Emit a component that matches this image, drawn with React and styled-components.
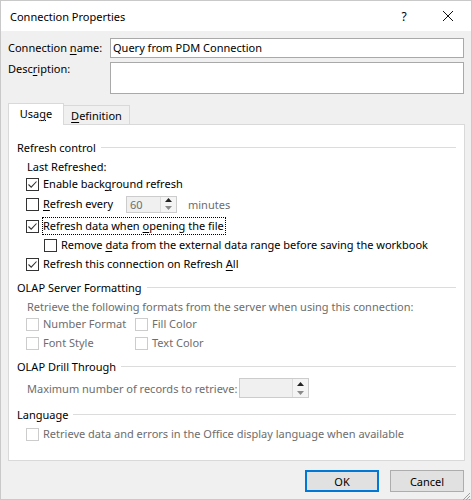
// Connection Properties dialog (Excel style)

import React from 'react';
import styled, { createGlobalStyle } from 'styled-components';

const GlobalStyle = createGlobalStyle`
    body {
        margin: 0;
        background: #ffffff;
    }
`

const Check = ({ checked, disabled }) => (
    <Box disabled={disabled}>
        {checked && (
            <svg width="11" height="11" viewBox="0 0 11 11">
                <path d="M1.5 5.5 L4.2 8.2 L9.5 2.5" fill="none" stroke="#333" strokeWidth="1.1" />
            </svg>
        )}
    </Box>
)

const Spinner = ({ value, width, height, gap }) => (
    <Spin width={width} height={height} gap={gap}>
        <SpinValue>{value}</SpinValue>
        <SpinButtons>
            <SpinHalf>
                <svg width="7" height="4" viewBox="0 0 7 4"><path d="M0 4 L3.5 0 L7 4 Z" fill="#222" /></svg>
            </SpinHalf>
            <SpinHalf>
                <svg width="7" height="4" viewBox="0 0 7 4"><path d="M0 0 L3.5 4 L7 0 Z" fill="#8a8a8a" /></svg>
            </SpinHalf>
        </SpinButtons>
    </Spin>
)

const App = () => {
    return (
        <>
            <GlobalStyle />
            <Window>
                <TitleBar>
                    <Title>Connection Properties</Title>
                    <HelpButton>?</HelpButton>
                    <CloseButton>
                        <svg width="10" height="10" viewBox="0 0 10 10">
                            <path d="M0 0 L10 10 M10 0 L0 10" stroke="#111" strokeWidth="1" />
                        </svg>
                    </CloseButton>
                </TitleBar>
                <Body>
                    <FormGrid>
                        <FieldLabel>Connection <u>n</u>ame:</FieldLabel>
                        <TextInput>Query from PDM Connection</TextInput>
                        <FieldLabel top>Desc<u>r</u>iption:</FieldLabel>
                        <TextInput />
                    </FormGrid>

                    <Tabs>
                        <Tab active>Usa<u>g</u>e</Tab>
                        <Tab><u>D</u>efinition</Tab>
                    </Tabs>
                    <Panel>
                        <Legend>
                            <span>Refresh control</span>
                            <Rule />
                        </Legend>
                        <Row h={18} indent={10}>Last Refreshed:</Row>
                        <Row h={18} indent={9}>
                            <Check checked />
                            <CheckText>Enable back<u>g</u>round refresh</CheckText>
                        </Row>
                        <Row h={22} indent={9}>
                            <Check />
                            <CheckText w={83}><u>R</u>efresh every</CheckText>
                            <Spinner value="60" width={51} height={17} />
                            <Muted gap={11}>minutes</Muted>
                        </Row>
                        <Row h={22} indent={9}>
                            <Check checked />
                            <CheckText focused>Refresh data when <u>o</u>pening the file</CheckText>
                        </Row>
                        <Row h={16} indent={27}>
                            <Check />
                            <CheckText>Remove <u>d</u>ata from the external data range before saving the workbook</CheckText>
                        </Row>
                        <Row h={22} indent={9}>
                            <Check checked />
                            <CheckText>Refresh this connection on Refresh <u>A</u>ll</CheckText>
                        </Row>

                        <Legend mt={2}>
                            <span>OLAP Server Formatting</span>
                            <Rule />
                        </Legend>
                        <Row h={19} indent={10} disabled>Retrieve the following formats from the server when using this connection:</Row>
                        <CheckGrid>
                            <Row>
                                <Check disabled />
                                <CheckText disabled>Number Format</CheckText>
                            </Row>
                            <Row>
                                <Check disabled />
                                <CheckText disabled>Fill Color</CheckText>
                            </Row>
                            <Row>
                                <Check disabled />
                                <CheckText disabled>Font Style</CheckText>
                            </Row>
                            <Row>
                                <Check disabled />
                                <CheckText disabled>Text Color</CheckText>
                            </Row>
                        </CheckGrid>

                        <Legend mt={2}>
                            <span>OLAP Drill Through</span>
                            <Rule />
                        </Legend>
                        <Row h={20} mt={2} indent={10} disabled>
                            <FixedLabel w={212}>Maximum number of records to retrieve:</FixedLabel>
                            <Spinner value="" width={70} height={20} />
                        </Row>

                        <Legend mt={6}>
                            <span>Language</span>
                            <Rule />
                        </Legend>
                        <Row h={20} indent={9}>
                            <Check disabled />
                            <CheckText disabled>Retrieve data and errors in the Office display language when available</CheckText>
                        </Row>
                    </Panel>

                    <Footer>
                        <Button primary>OK</Button>
                        <Button>Cancel</Button>
                    </Footer>
                </Body>
                <Grip>
                    <svg width="10" height="10" viewBox="0 0 10 10">
                        <path d="M9 2 L2 9 M9 5 L5 9 M9 8 L8 9" stroke="#a0a0a0" strokeWidth="1" />
                    </svg>
                </Grip>
            </Window>
        </>
    )
}

const Window = styled.div`
    position: relative;
    width: 472px;
    height: 500px;
    box-sizing: border-box;
    border: 1px solid #c9c9c9;
    display: flex;
    flex-direction: column;
    font-family: "Noto Sans", "Open Sans", sans-serif;
    font-size: 11px;
    color: #000;
    background: #f0f0f0;
    u {
        text-decoration: underline;
        text-underline-offset: 2px;
    }
`

const TitleBar = styled.div`
    height: 30px;
    background: #ffffff;
    display: flex;
    align-items: center;
    padding-left: 9px;
`

const Title = styled.div`
    flex: 1;
    font-size: 11px;
`

const HelpButton = styled.div`
    width: 30px;
    text-align: center;
    font-size: 12px;
    margin-right: 6px;
`

const CloseButton = styled.div`
    width: 46px;
    height: 30px;
    display: flex;
    align-items: center;
    justify-content: center;
`

const Body = styled.div`
    flex: 1;
    padding: 7px 7px 0 6px;
    display: flex;
    flex-direction: column;
`

const FormGrid = styled.div`
    display: grid;
    grid-template-columns: 103px 354px;
    grid-template-rows: 20px 32px;
    row-gap: 4px;
`

const FieldLabel = styled.div`
    padding-left: 1px;
    line-height: ${p => (p.top ? '13px' : '16px')};
    padding-top: ${p => (p.top ? '0' : '2px')};
    white-space: nowrap;
`

const TextInput = styled.div`
    box-sizing: border-box;
    background: #ffffff;
    border: 1px solid #a9a9a9;
    padding: 1px 2px;
    line-height: 16px;
`

const Tabs = styled.div`
    margin-top: 9px;
    display: flex;
    align-items: flex-end;
    padding-left: 1px;
    position: relative;
    z-index: 1;
    margin-bottom: -1px;
`

const Tab = styled.div`
    box-sizing: border-box;
    height: ${p => (p.active ? '22px' : '20px')};
    width: ${p => (p.active ? '56px' : '66px')};
    background: ${p => (p.active ? '#ffffff' : '#f0f0f0')};
    border: 1px solid #d9d9d9;
    border-left: ${p => (p.active ? '1px solid #d9d9d9' : 'none')};
    border-bottom: ${p => (p.active ? 'none' : '1px solid #d9d9d9')};
    display: flex;
    align-items: center;
    justify-content: center;
    padding-bottom: ${p => (p.active ? '2px' : '0')};
`

const Panel = styled.div`
    box-sizing: border-box;
    margin-left: 1px;
    width: 457px;
    height: 337px;
    background: #ffffff;
    border: 1px solid #d9d9d9;
    padding: 12px 8px 0 8px;
    display: flex;
    flex-direction: column;
`

const Legend = styled.div`
    height: 20px;
    margin-top: ${p => p.mt || 0}px;
    display: flex;
    align-items: center;
    gap: 5px;
    white-space: nowrap;
`

const Rule = styled.div`
    flex: 1;
    height: 1px;
    background: #dcdcdc;
`

const Row = styled.div`
    height: ${p => (p.h ? `${p.h}px` : 'auto')};
    margin-top: ${p => p.mt || 0}px;
    padding-left: ${p => p.indent || 0}px;
    display: flex;
    align-items: center;
    white-space: nowrap;
    color: ${p => (p.disabled ? '#6d6d6d' : '#000')};
`

const CheckGrid = styled.div`
    display: grid;
    grid-template-columns: 109px 1fr;
    grid-template-rows: 16px 22px;
    padding-left: 9px;
`

const Box = styled.div`
    box-sizing: border-box;
    width: 13px;
    height: 13px;
    flex: none;
    border: 1px solid ${p => (p.disabled ? '#cccccc' : '#333333')};
    background: #ffffff;
    display: flex;
    align-items: center;
    justify-content: center;
`

const CheckText = styled.span`
    margin-left: 4px;
    width: ${p => (p.w ? `${p.w}px` : 'auto')};
    color: ${p => (p.disabled ? '#6d6d6d' : '#000')};
    outline: ${p => (p.focused ? '1px dotted #000' : 'none')};
    line-height: 16px;
    padding-right: ${p => (p.focused ? '1px' : '0')};
`

const FixedLabel = styled.span`
    width: ${p => p.w}px;
    flex: none;
`

const Muted = styled.span`
    margin-left: ${p => p.gap}px;
    color: #6d6d6d;
`

const Spin = styled.div`
    box-sizing: border-box;
    width: ${p => p.width}px;
    height: ${p => p.height}px;
    flex: none;
    border: 1px solid #cccccc;
    background: #f0f0f0;
    display: flex;
`

const SpinValue = styled.div`
    flex: 1;
    padding-left: 3px;
    color: #6d6d6d;
    display: flex;
    align-items: center;
`

const SpinButtons = styled.div`
    width: 15px;
    display: flex;
    flex-direction: column;
    border-left: 1px solid #dcdcdc;
    background: #f4f4f4;
`

const SpinHalf = styled.div`
    flex: 1;
    display: flex;
    align-items: center;
    justify-content: center;
`

const Footer = styled.div`
    margin-top: 9px;
    display: flex;
    justify-content: flex-end;
    gap: 11px;
`

const Button = styled.div`
    box-sizing: border-box;
    width: 74px;
    height: 22px;
    background: #e1e1e1;
    border: ${p => (p.primary ? '2px solid #0078d7' : '1px solid #adadad')};
    display: flex;
    align-items: center;
    justify-content: center;
`

const Grip = styled.div`
    position: absolute;
    right: 0;
    bottom: 0;
    width: 10px;
    height: 10px;
`

export default App;
